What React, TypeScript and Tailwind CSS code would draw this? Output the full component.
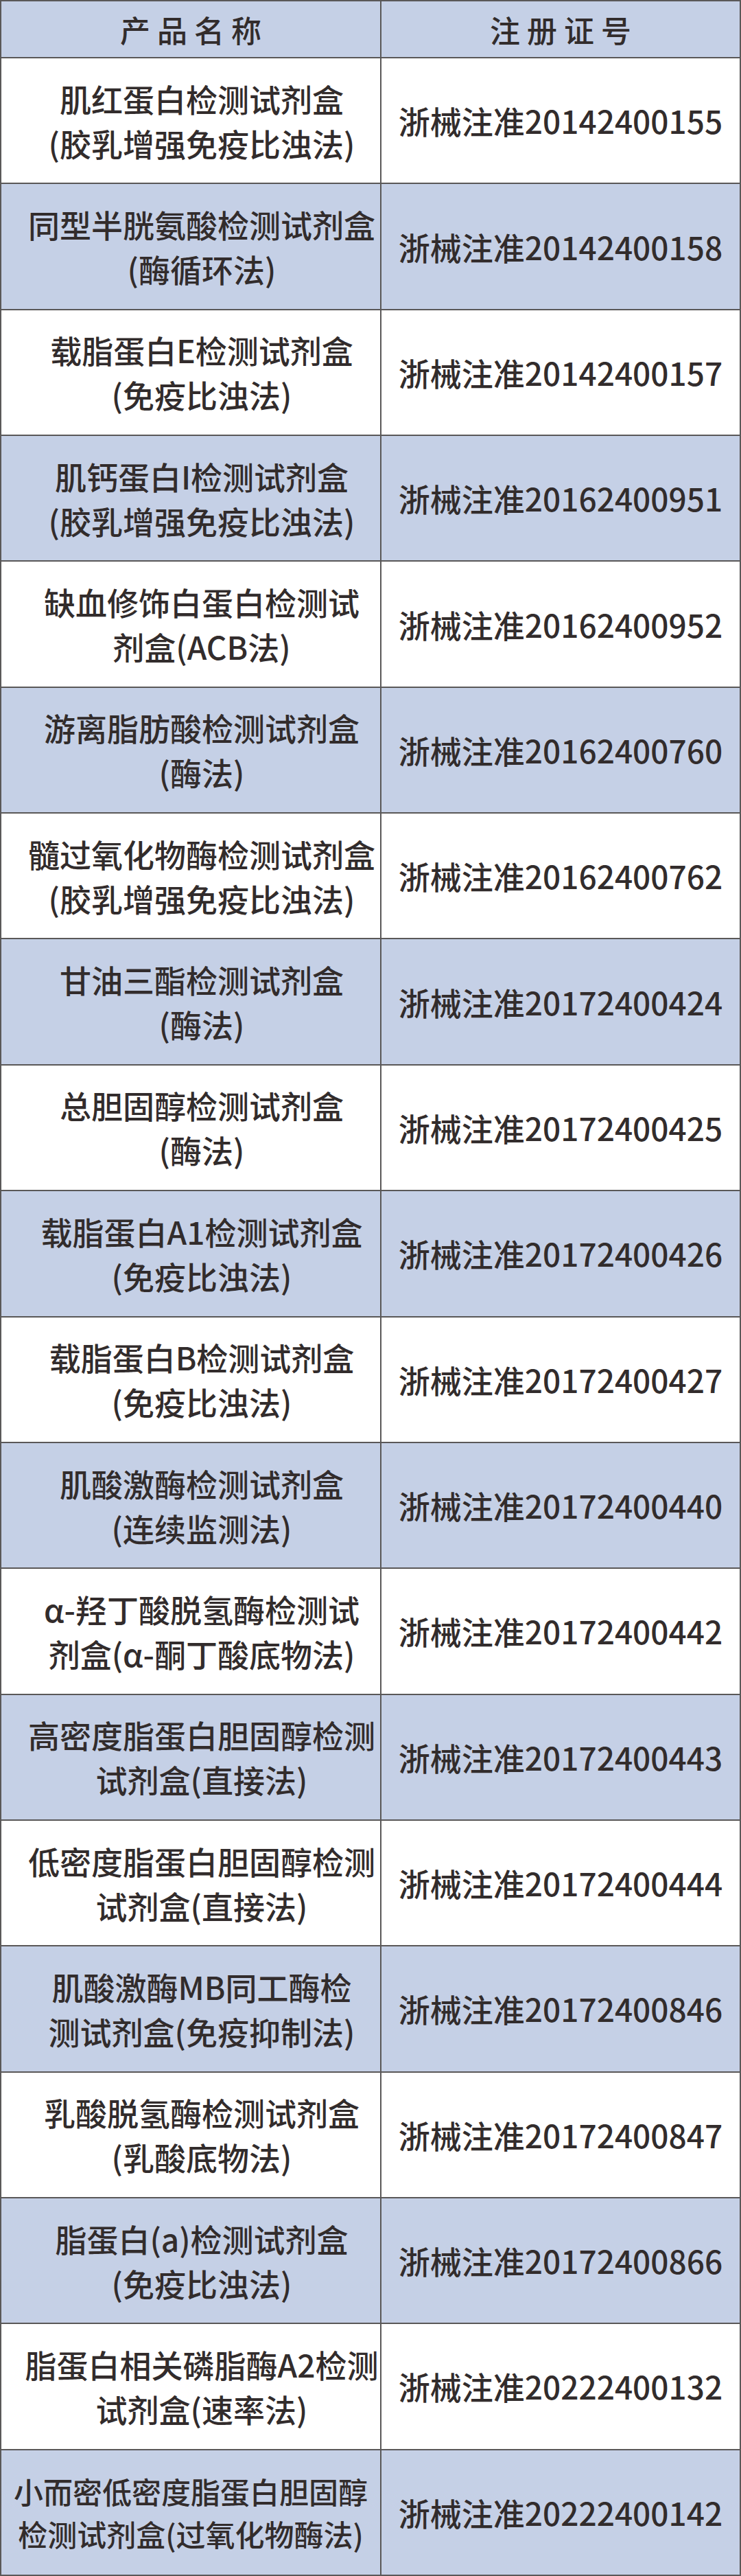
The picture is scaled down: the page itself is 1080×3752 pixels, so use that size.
const rows: { name: [string, string]; no: string }[] = [
    { name: ["肌红蛋白检测试剂盒", "(胶乳增强免疫比浊法)"], no: "浙械注准20142400155" },
    { name: ["同型半胱氨酸检测试剂盒", "(酶循环法)"], no: "浙械注准20142400158" },
    { name: ["载脂蛋白E检测试剂盒", "(免疫比浊法)"], no: "浙械注准20142400157" },
    { name: ["肌钙蛋白I检测试剂盒", "(胶乳增强免疫比浊法)"], no: "浙械注准20162400951" },
    { name: ["缺血修饰白蛋白检测试", "剂盒(ACB法)"], no: "浙械注准20162400952" },
    { name: ["游离脂肪酸检测试剂盒", "(酶法)"], no: "浙械注准20162400760" },
    { name: ["髓过氧化物酶检测试剂盒", "(胶乳增强免疫比浊法)"], no: "浙械注准20162400762" },
    { name: ["甘油三酯检测试剂盒", "(酶法)"], no: "浙械注准20172400424" },
    { name: ["总胆固醇检测试剂盒", "(酶法)"], no: "浙械注准20172400425" },
    { name: ["载脂蛋白A1检测试剂盒", "(免疫比浊法)"], no: "浙械注准20172400426" },
    { name: ["载脂蛋白B检测试剂盒", "(免疫比浊法)"], no: "浙械注准20172400427" },
    { name: ["肌酸激酶检测试剂盒", "(连续监测法)"], no: "浙械注准20172400440" },
    { name: ["α-羟丁酸脱氢酶检测试", "剂盒(α-酮丁酸底物法)"], no: "浙械注准20172400442" },
    { name: ["高密度脂蛋白胆固醇检测", "试剂盒(直接法)"], no: "浙械注准20172400443" },
    { name: ["低密度脂蛋白胆固醇检测", "试剂盒(直接法)"], no: "浙械注准20172400444" },
    { name: ["肌酸激酶MB同工酶检", "测试剂盒(免疫抑制法)"], no: "浙械注准20172400846" },
    { name: ["乳酸脱氢酶检测试剂盒", "(乳酸底物法)"], no: "浙械注准20172400847" },
    { name: ["脂蛋白(a)检测试剂盒", "(免疫比浊法)"], no: "浙械注准20172400866" },
    { name: ["脂蛋白相关磷脂酶A2检测", "试剂盒(速率法)"], no: "浙械注准20222400132" },
    { name: ["小而密低密度脂蛋白胆固醇", "检测试剂盒(过氧化物酶法)"], no: "浙械注准20222400142" },
];

const App = () => {
    return (
        <div
            className="w-[1080px] h-[3752px] border-2 border-[#5a5858] grid grid-rows-[81px_repeat(20,minmax(0,1fr))] text-[#322c2c] font-medium bg-white"
            style={{ fontFamily: '"Noto Sans CJK SC", "Noto Sans", sans-serif' }}
        >
            <div className="grid grid-cols-[554px_1fr] bg-[#c5d0e6]">
                <div className="flex items-center justify-center border-r-2 border-[#5a5858] text-[44px] tracking-[10px] pl-[10px]">
                    产品名称
                </div>
                <div className="flex items-center justify-center text-[44px] tracking-[10px] pl-[10px]">注册证号</div>
            </div>

            {rows.map((row, i) => {
                const last = i === rows.length - 1;
                return (
                    <div
                        key={row.no}
                        className={`grid grid-cols-[554px_1fr] border-t-2 border-[#5a5858] ${i % 2 === 1 ? "bg-[#c5d0e6]" : "bg-white"}`}
                    >
                        <div
                            className={`flex flex-col items-center justify-center border-r-2 border-[#5a5858] text-center whitespace-nowrap ${
                                last ? "text-[43px] leading-[62px]" : "pl-[32px] text-[46px] leading-[65px]"
                            }`}
                        >
                            <p>{row.name[0]}</p>
                            <p>{row.name[1]}</p>
                        </div>
                        <div className="flex items-center justify-center text-[46px] whitespace-nowrap">{row.no}</div>
                    </div>
                );
            })}
        </div>
    );
};

export default App;
